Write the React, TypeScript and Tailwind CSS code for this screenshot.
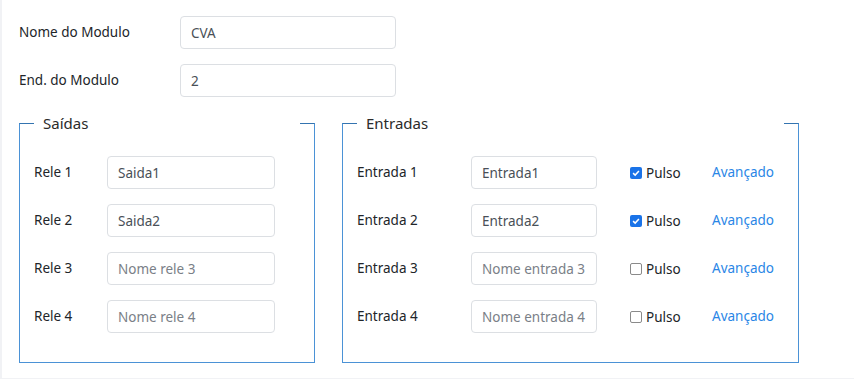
import { useState } from 'react'

const saidas = [
  { label: 'Rele 1', value: 'Saida1', placeholder: 'Nome rele 1' },
  { label: 'Rele 2', value: 'Saida2', placeholder: 'Nome rele 2' },
  { label: 'Rele 3', value: '', placeholder: 'Nome rele 3' },
  { label: 'Rele 4', value: '', placeholder: 'Nome rele 4' },
]

const entradas = [
  { label: 'Entrada 1', value: 'Entrada1', placeholder: 'Nome entrada 1', pulso: true },
  { label: 'Entrada 2', value: 'Entrada2', placeholder: 'Nome entrada 2', pulso: true },
  { label: 'Entrada 3', value: '', placeholder: 'Nome entrada 3', pulso: false },
  { label: 'Entrada 4', value: '', placeholder: 'Nome entrada 4', pulso: false },
]

const inputCls =
  'h-[33px] rounded-[4px] border border-[#dcdfe3] bg-white px-[10px] text-[13.5px] text-[#495057] placeholder:text-[#7a8087] outline-none'

function Check({ checked, onClick }: { checked: boolean; onClick: () => void }) {
  return (
    <button
      onClick={onClick}
      className={
        checked
          ? 'flex h-[12px] w-[12px] items-center justify-center rounded-[2px] bg-[#1a73e8]'
          : 'h-[12px] w-[12px] rounded-[2px] border border-[#8a8a8a] bg-white'
      }
    >
      {checked && (
        <svg viewBox="0 0 12 12" className="h-[10px] w-[10px]">
          <path d="M2.5 6.2 L5 8.5 L9.5 3.5" fill="none" stroke="white" strokeWidth="1.8" />
        </svg>
      )}
    </button>
  )
}

export default function App() {
  const [pulsos, setPulsos] = useState(entradas.map((e) => e.pulso))

  return (
    <div
      className="h-[379px] w-[854px] overflow-hidden border-b border-l-2 border-[#f1f2f5] bg-white text-[13.5px] text-[#212529]"
      style={{ fontFamily: '"Noto Sans", "Open Sans", sans-serif' }}
    >
      <div className="pl-[17px] pt-[16px]">
        <div className="flex items-center">
          <label className="w-[161px]">Nome do Modulo</label>
          <input className={inputCls + ' w-[216px]'} defaultValue="CVA" />
        </div>
        <div className="mt-[15px] flex items-center">
          <label className="w-[161px]">End. do Modulo</label>
          <input className={inputCls + ' w-[216px]'} defaultValue="2" />
        </div>

        <div className="mt-[15px] flex gap-[27px]">
          {/* Saidas */}
          <fieldset className="w-[296px] border border-[#4b92d6] border-t-[#3474b0] px-[14px] pb-[29px]">
            <legend className="w-full px-[9px] text-[15px] leading-[22px] text-[#2b2b2b]">Saídas</legend>
            <div className="mt-[22px] flex flex-col gap-[15px]">
              {saidas.map((s) => (
                <div key={s.label} className="flex items-center">
                  <label className="w-[73px]">{s.label}</label>
                  <input
                    className={inputCls + ' w-[168px]'}
                    defaultValue={s.value}
                    placeholder={s.placeholder}
                  />
                </div>
              ))}
            </div>
          </fieldset>

          {/* Entradas */}
          <fieldset className="w-[457px] border border-[#4b92d6] border-t-[#3474b0] px-[14px] pb-[29px]">
            <legend className="w-full px-[9px] text-[15px] leading-[22px] text-[#2b2b2b]">Entradas</legend>
            <div className="mt-[22px] flex flex-col gap-[15px]">
              {entradas.map((e, i) => (
                <div key={e.label} className="flex items-center">
                  <label className="w-[114px]">{e.label}</label>
                  <input
                    className={inputCls + ' w-[126px]'}
                    defaultValue={e.value}
                    placeholder={e.placeholder}
                  />
                  <div className="ml-[33px] flex w-[82px] items-center gap-[4px] self-start pt-[9px]">
                    <Check
                      checked={pulsos[i]}
                      onClick={() => setPulsos(pulsos.map((p, j) => (j === i ? !p : p)))}
                    />
                    <span className="leading-[16px]">Pulso</span>
                  </div>
                  <a href="#" className="text-[#2a86e6]">
                    Avançado
                  </a>
                </div>
              ))}
            </div>
          </fieldset>
        </div>
      </div>
    </div>
  )
}
